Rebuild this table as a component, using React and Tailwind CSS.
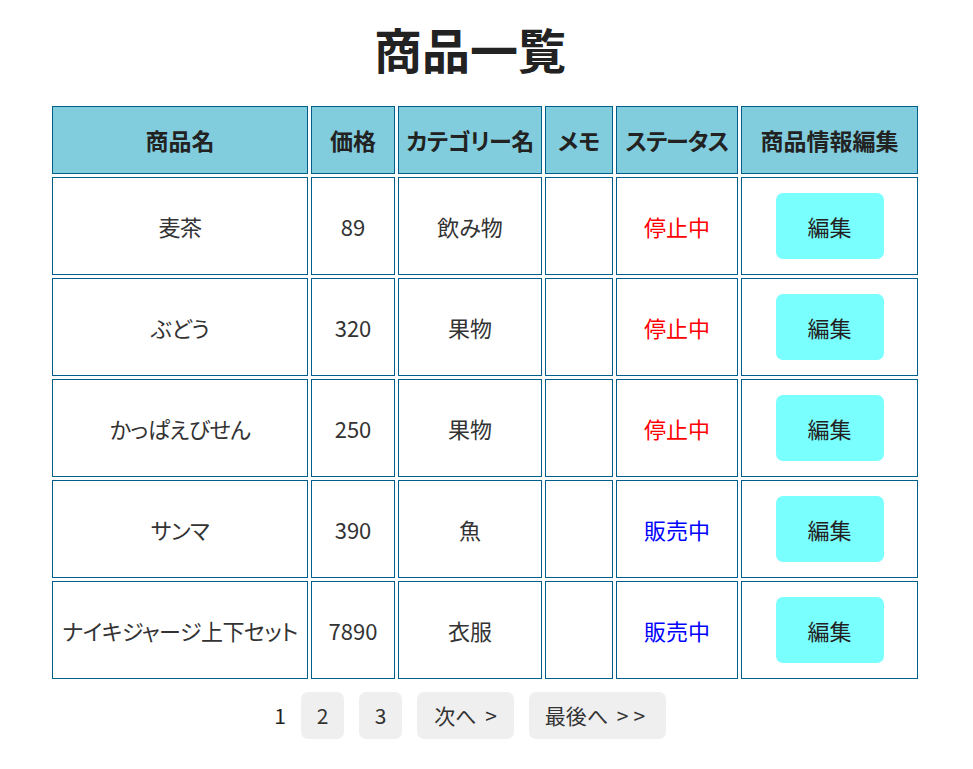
import React from "react";

const products = [
  { name: "麦茶", price: 89, category: "飲み物", memo: "", active: false },
  { name: "ぶどう", price: 320, category: "果物", memo: "", active: false },
  { name: "かっぱえびせん", price: 250, category: "果物", memo: "", active: false },
  { name: "サンマ", price: 390, category: "魚", memo: "", active: true },
  { name: "ナイキジャージ上下セット", price: 7890, category: "衣服", memo: "", active: true },
];

const th = "border border-[#005f8a] bg-[#81cddd] h-[68px] font-bold text-[23px] text-[#222] text-center p-0 whitespace-nowrap";
const td = "border border-[#005f8a] h-[98px] text-[22px] text-center p-0 whitespace-nowrap";

const App = () => {
  return (
    <div className="w-[973px] min-h-[769px] bg-white pt-[14px] font-['Noto_Sans_CJK_JP','Noto_Sans',sans-serif] [font-feature-settings:'palt']">
      <h1 className="text-center text-[48px] leading-[69px] font-bold text-[#222] mb-[20px] pr-[33px]">
        商品一覧
      </h1>
      <table className="border-separate border-spacing-[3px] ml-[49px]">
        <thead>
          <tr>
            <th className={`${th} w-[256px]`}>商品名</th>
            <th className={`${th} w-[84px]`}>価格</th>
            <th className={`${th} w-[144px] tracking-[-0.5px]`}>カテゴリー名</th>
            <th className={`${th} w-[68px]`}>メモ</th>
            <th className={`${th} w-[122px] tracking-[-1px]`}>ステータス</th>
            <th className={`${th} w-[177px]`}>商品情報編集</th>
          </tr>
        </thead>
        <tbody>
          {products.map((p) => (
            <tr key={p.name}>
              <td className={`${td} text-[#333] tracking-[-0.5px]`}>{p.name}</td>
              <td className={`${td} text-[#333]`}>{p.price}</td>
              <td className={`${td} text-[#333]`}>{p.category}</td>
              <td className={`${td} text-[#333]`}>{p.memo}</td>
              <td className={`${td} ${p.active ? "text-[#0000ff]" : "text-[#ff0000]"}`}>
                {p.active ? "販売中" : "停止中"}
              </td>
              <td className={td}>
                <button className="w-[108px] h-[66px] rounded-[7px] bg-[#7affff] text-[22px] text-[#222] align-middle">
                  編集
                </button>
              </td>
            </tr>
          ))}
        </tbody>
      </table>
      <div className="flex items-center mt-[10px] pl-[269px] text-[21px] text-[#333]">
        <span className="w-[22px] text-center text-[#222]">1</span>
        <button className="ml-[10px] w-[43px] h-[47px] rounded-[7px] bg-[#efefef]">2</button>
        <button className="ml-[15px] w-[43px] h-[47px] rounded-[7px] bg-[#efefef]">3</button>
        <button className="ml-[15px] w-[97px] h-[47px] rounded-[7px] bg-[#efefef]">次へ <span className="ml-[4px]">&gt;</span></button>
        <button className="ml-[15px] w-[137px] h-[47px] rounded-[7px] bg-[#efefef]">最後へ <span className="ml-[4px] tracking-[5px]">&gt;&gt;</span></button>
      </div>
    </div>
  );
};

export default App;
